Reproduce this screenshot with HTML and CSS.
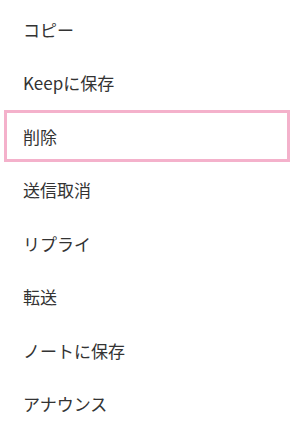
FILE: index.html
```html
<!DOCTYPE html>
<html lang="ja">
<head>
    <meta charset="UTF-8">
    <meta name="viewport" content="width=device-width, initial-scale=1.0">
    <title>メニュー</title>
    <link rel="stylesheet" href="styles.css">
</head>
<body>
    <!-- Message action menu -->
    <ul class="menu">
        <li class="menu-item">コピー</li>
        <li class="menu-item">Keepに保存</li>
        <li class="menu-item selected">削除</li>
        <li class="menu-item">送信取消</li>
        <li class="menu-item">リプライ</li>
        <li class="menu-item">転送</li>
        <li class="menu-item">ノートに保存</li>
        <li class="menu-item">アナウンス</li>
    </ul>
</body>
</html>
```

FILE: styles.css
```css
body {
    margin: 0;
    padding: 0;
    background-color: #fff;
    font-family: "Noto Sans CJK JP", "Noto Sans", sans-serif;
}
.menu {
    list-style: none;
    margin: 0;
    padding: 3px 0 0;
    display: flex;
    flex-direction: column;
    gap: 1.5px;
}
.menu-item {
    box-sizing: border-box;
    height: 52px;
    margin: 0 12px 0 4px;
    padding-left: 16px;
    border: 3px solid transparent;
    display: flex;
    align-items: center;
    font-size: 17px;
    color: #333;
}
/* highlighted row */
.menu-item.selected {
    border-color: #f4b1cb;
}
```
